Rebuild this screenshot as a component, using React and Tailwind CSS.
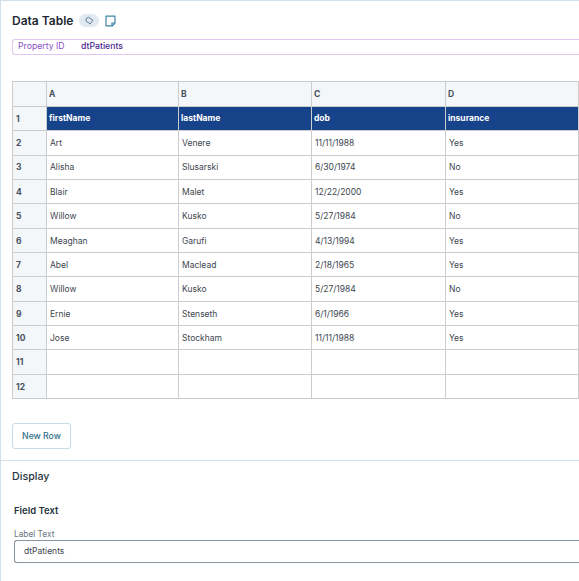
const cols = ["A", "B", "C", "D"];
const rows = [
  ["firstName", "lastName", "dob", "insurance"],
  ["Art", "Venere", "11/11/1988", "Yes"],
  ["Alisha", "Slusarski", "6/30/1974", "No"],
  ["Blair", "Malet", "12/22/2000", "Yes"],
  ["Willow", "Kusko", "5/27/1984", "No"],
  ["Meaghan", "Garufi", "4/13/1994", "Yes"],
  ["Abel", "Maclead", "2/18/1965", "Yes"],
  ["Willow", "Kusko", "5/27/1984", "No"],
  ["Ernie", "Stenseth", "6/1/1966", "Yes"],
  ["Jose", "Stockham", "11/11/1988", "Yes"],
  ["", "", "", ""],
  ["", "", "", ""],
];

export default function App() {
  return (
    <div className="w-[579px] h-[581px] overflow-hidden bg-white border-t border-l border-[#d3e0ea] font-['Inter',sans-serif] text-[#2f3a45]">
      <div className="flex items-center h-[38px] pl-[11px] pt-[1px]">
        <h1 className="text-[12px] font-semibold text-[#1f2933]">Data Table</h1>
        <span className="ml-[6px] flex items-center justify-center w-[20px] h-[13px] rounded-full bg-[#e3e9f0]">
          <svg width="9" height="9" viewBox="0 0 12 12" fill="none" stroke="#3d6f8c" strokeWidth="1.1">
            <path d="M1.5 3.5 L4.5 1.5 L10.5 5.5 L7 10.5 L1.5 7 Z" strokeLinejoin="round" />
          </svg>
        </span>
        <svg className="ml-[6px]" width="11" height="12" viewBox="0 0 11 12" fill="none" stroke="#3d84a8" strokeWidth="1.2">
          <path d="M1 1.2 H10 V8 L7.5 10.8 H1 Z" strokeLinejoin="round" />
          <path d="M7 11 V8 H10" />
        </svg>
      </div>
      <div className="ml-[11px] flex items-center h-[16px] border border-r-0 border-[#e0c8f0] rounded-l-[3px] pl-[5px] text-[8.7px]">
        <span className="w-[63px] text-[#8b4fc4]">Property ID</span>
        <span className="font-medium text-[#4b1f8f]">dtPatients</span>
      </div>
      <table className="ml-[11px] mt-[26px] w-[566px] table-fixed border-collapse text-[8.5px]">
        <colgroup>
          <col className="w-[34px]" />
          <col className="w-[132px]" />
          <col className="w-[133px]" />
          <col className="w-[134px]" />
          <col className="w-[133px]" />
        </colgroup>
        <thead>
          <tr className="h-[25px] bg-[#f4f7fa]">
            <th className="border border-[#cccccc]" />
            {cols.map((c) => (
              <th key={c} className="border border-[#cccccc] pl-[2px] text-left font-bold text-[#46505c]">
                {c}
              </th>
            ))}
          </tr>
        </thead>
        <tbody>
          {rows.map((row, i) => (
            <tr key={i} className="h-[24.35px]">
              <td className="border border-[#cccccc] bg-[#f4f7fa] pl-[3px] pt-[1px] font-bold text-[#46505c]">{i + 1}</td>
              {row.map((cell, j) => (
                <td
                  key={j}
                  className={
                    i === 0
                      ? "border border-[#cccccc] bg-[#17438a] pl-[2px] font-bold text-white"
                      : "border border-[#cccccc] pl-[3px] pt-[1px] text-[#3c4650]"
                  }
                >
                  {cell}
                </td>
              ))}
            </tr>
          ))}
        </tbody>
      </table>
      <button className="ml-[11px] mt-[24px] block w-[59px] h-[26px] rounded-[3px] border border-[#c5dbe6] bg-white text-[8.7px] font-medium text-[#2f6f8a]">
        New Row
      </button>
      <div className="mt-[11px] border-t border-[#d3e0ea] pl-[11px] pt-[9px]">
        <h2 className="text-[10.7px] leading-[13px] font-medium text-[#28323c]">Display</h2>
        <div className="pl-[2px] pt-[22px]">
          <h3 className="text-[9.5px] leading-[12px] font-semibold text-[#28323c]">Field Text</h3>
          <label className="block mt-[13px] text-[8.3px] leading-[9px] text-[#6a7580]">Label Text</label>
          <div className="mt-[1px] flex items-center h-[23px] border border-r-0 border-[#87959f] rounded-l-[3px] pl-[9px] text-[8.5px] text-[#3c4650]">
            dtPatients
          </div>
        </div>
      </div>
    </div>
  );
}
